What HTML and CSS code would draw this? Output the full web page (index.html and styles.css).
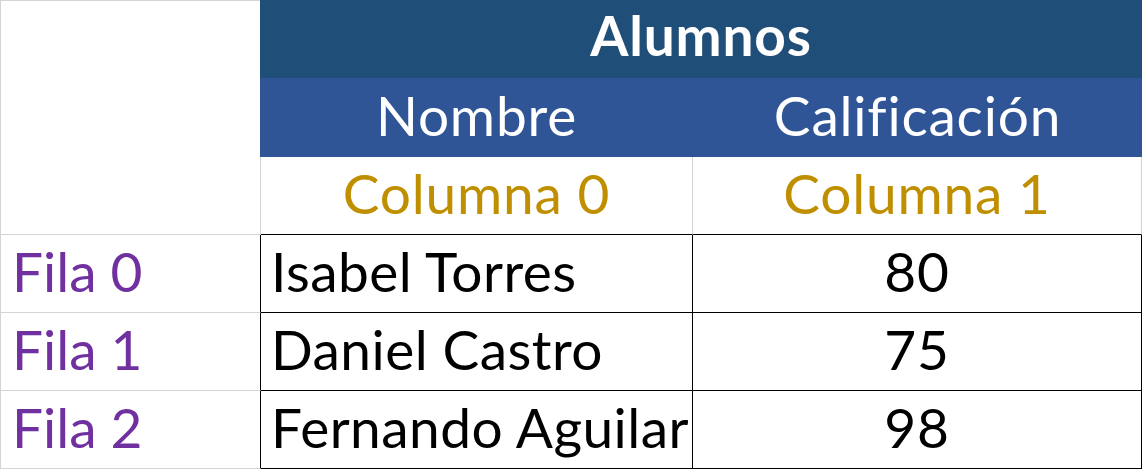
FILE: index.html
```html
<!DOCTYPE html>
<html lang="es">
<head>
<meta charset="utf-8">
<title>Alumnos</title>
<link rel="stylesheet" href="styles.css">
</head>
<body>
<div class="sheet">
  <div class="cell corner"></div>
  <div class="cell title">Alumnos</div>
  <div class="cell head first">Nombre</div>
  <div class="cell head">Calificación</div>
  <div class="cell colidx">Columna 0</div>
  <div class="cell colidx">Columna 1</div>

  <div class="cell rowidx">Fila 0</div>
  <div class="cell data name">Isabel Torres</div>
  <div class="cell data num">80</div>

  <div class="cell rowidx">Fila 1</div>
  <div class="cell data name">Daniel Castro</div>
  <div class="cell data num">75</div>

  <div class="cell rowidx">Fila 2</div>
  <div class="cell data name">Fernando Aguilar</div>
  <div class="cell data num">98</div>
</div>
</body>
</html>
```

FILE: styles.css
```css
html, body {
  margin: 0;
  padding: 0;
  background: #ffffff;
}

.sheet {
  display: grid;
  grid-template-columns: 261px 432px 449px;
  grid-template-rows: 78px 79px 78px 78px 78px 78px;
  width: 1142px;
  height: 469px;
  font-family: "Lato", "Liberation Sans", sans-serif;
  font-size: 55px;
  letter-spacing: 0.8px;
  overflow: hidden;
}

.cell {
  box-sizing: border-box;
  display: flex;
  align-items: flex-end;
  white-space: nowrap;
  overflow: hidden;
  line-height: 1;
  padding-bottom: 13px;
}

.corner {
  grid-column: 1;
  grid-row: 1 / 4;
  border: 1px solid #d4d4d4;
  padding: 0;
}

.title {
  grid-column: 2 / 4;
  grid-row: 1;
  margin-left: -1px;
  background: #1f4e79;
  color: #ffffff;
  font-weight: 700;
  justify-content: center;
  padding-bottom: 15px;
}

.head {
  grid-row: 2;
  background: #2f5597;
  color: #ffffff;
  justify-content: center;
  padding-bottom: 14px;
}

.head.first {
  margin-left: -1px;
}

.colidx {
  grid-row: 3;
  color: #bf8f00;
  justify-content: center;
  border-right: 1px solid #d4d4d4;
  border-bottom: 1px solid #000000;
}

.rowidx {
  color: #7030a0;
  border-left: 1px solid #d4d4d4;
  border-bottom: 1px solid #d4d4d4;
  border-right: 1px solid #000000;
  padding-left: 11px;
  letter-spacing: 0;
}

.data {
  color: #000000;
  border-right: 1px solid #000000;
  border-bottom: 1px solid #000000;
}

.name {
  padding-left: 10px;
  letter-spacing: 0.45px;
}

.num {
  justify-content: center;
}
```
